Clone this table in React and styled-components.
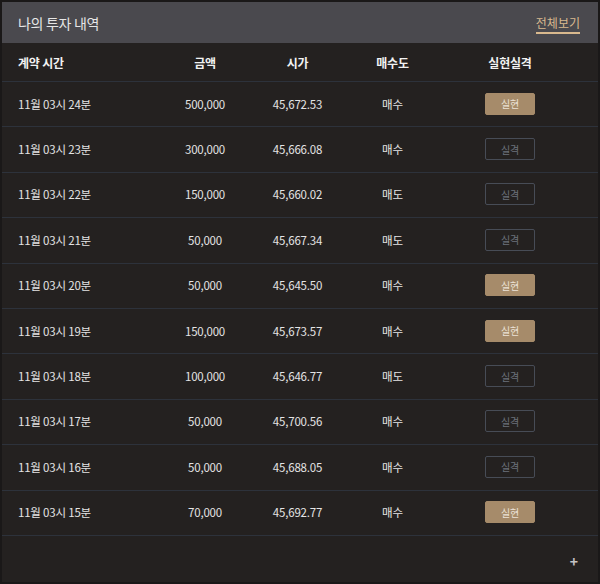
import React from "react";
import styled, { createGlobalStyle } from "styled-components";

const rows = [
  { time: "11월 03시 24분", amount: "500,000", price: "45,672.53", side: "매수", win: true },
  { time: "11월 03시 23분", amount: "300,000", price: "45,666.08", side: "매수", win: false },
  { time: "11월 03시 22분", amount: "150,000", price: "45,660.02", side: "매도", win: false },
  { time: "11월 03시 21분", amount: "50,000", price: "45,667.34", side: "매도", win: false },
  { time: "11월 03시 20분", amount: "50,000", price: "45,645.50", side: "매수", win: true },
  { time: "11월 03시 19분", amount: "150,000", price: "45,673.57", side: "매수", win: true },
  { time: "11월 03시 18분", amount: "100,000", price: "45,646.77", side: "매도", win: false },
  { time: "11월 03시 17분", amount: "50,000", price: "45,700.56", side: "매수", win: false },
  { time: "11월 03시 16분", amount: "50,000", price: "45,688.05", side: "매수", win: false },
  { time: "11월 03시 15분", amount: "70,000", price: "45,692.77", side: "매수", win: true },
];

function App() {
  return (
    <>
      <GlobalStyle />
      <Panel>
        <Header>
          <Title>나의 투자 내역</Title>
          <MoreLink>전체보기</MoreLink>
        </Header>
        <Table>
          <HeadRow>
            <Cell $left>계약 시간</Cell>
            <Cell>금액</Cell>
            <Cell>시가</Cell>
            <Cell>매수도</Cell>
            <Cell>실현실격</Cell>
          </HeadRow>
          {rows.map((r) => (
            <Row key={r.time}>
              <Cell $left>{r.time}</Cell>
              <Cell>{r.amount}</Cell>
              <Cell>{r.price}</Cell>
              <Cell>{r.side}</Cell>
              <Cell>
                <Badge $win={r.win}>{r.win ? "실현" : "실격"}</Badge>
              </Cell>
            </Row>
          ))}
        </Table>
        <Footer>
          <Plus>+</Plus>
        </Footer>
      </Panel>
    </>
  );
}

export default App;

const GlobalStyle = createGlobalStyle`
  html, body {
    margin: 0;
    padding: 0;
    background: #1c1a1a;
  }
  body {
    font-family: "Noto Sans CJK KR", "Noto Sans", sans-serif;
  }
`;

const Panel = styled.div`
  width: 600px;
  height: 584px;
  box-sizing: border-box;
  border: 2px solid #1a1818;
  background-color: #242120;
  display: flex;
  flex-direction: column;
`;
const Header = styled.div`
  height: 41px;
  background-color: #4a494e;
  display: flex;
  align-items: center;
  justify-content: space-between;
  padding: 0 18px 0 16px;
`;
const Title = styled.div`
  color: #e6e6e6;
  font-size: 14px;
  letter-spacing: -0.3px;
`;
const MoreLink = styled.a`
  color: #d9b98e;
  font-size: 12px;
  padding-bottom: 1px;
  border-bottom: 2px solid #d9b98e;
  margin-top: 2px;
  cursor: pointer;
`;
const Table = styled.div`
  display: flex;
  flex-direction: column;
`;
const HeadRow = styled.div`
  display: grid;
  grid-template-columns: 158px 90px 95px 95px 140px;
  align-items: center;
  height: 38px;
  border-bottom: 1px solid #2d323b;
  color: #f2f2f2;
  font-size: 12px;
  font-weight: bold;
`;
const Row = styled.div`
  display: grid;
  grid-template-columns: 158px 90px 95px 95px 140px;
  align-items: center;
  height: 45.4px;
  box-sizing: border-box;
  border-bottom: 1px solid #2d323b;
  color: #e4e4e4;
  font-size: 11.5px;
  padding-bottom: 1px;
`;
const Cell = styled.div`
  text-align: ${(p) => (p.$left ? "left" : "center")};
  padding-left: ${(p) => (p.$left ? "16px" : "0")};
  letter-spacing: -0.2px;
`;
const Badge = styled.span`
  display: inline-flex;
  align-items: center;
  justify-content: center;
  width: 50px;
  height: 22px;
  box-sizing: border-box;
  border-radius: 2px;
  font-size: 10px;
  background-color: ${(p) => (p.$win ? "#a68b6a" : "transparent")};
  border: 1px solid ${(p) => (p.$win ? "#a68b6a" : "#474c56")};
  color: ${(p) => (p.$win ? "#ebe2d6" : "#6c727c")};
`;
const Footer = styled.div`
  flex: 1;
  display: flex;
  align-items: flex-end;
  justify-content: flex-end;
  padding: 0 20px 14px 0;
`;
const Plus = styled.span`
  color: #c4c4c4;
  font-size: 14px;
  font-weight: bold;
  line-height: 1;
`;
